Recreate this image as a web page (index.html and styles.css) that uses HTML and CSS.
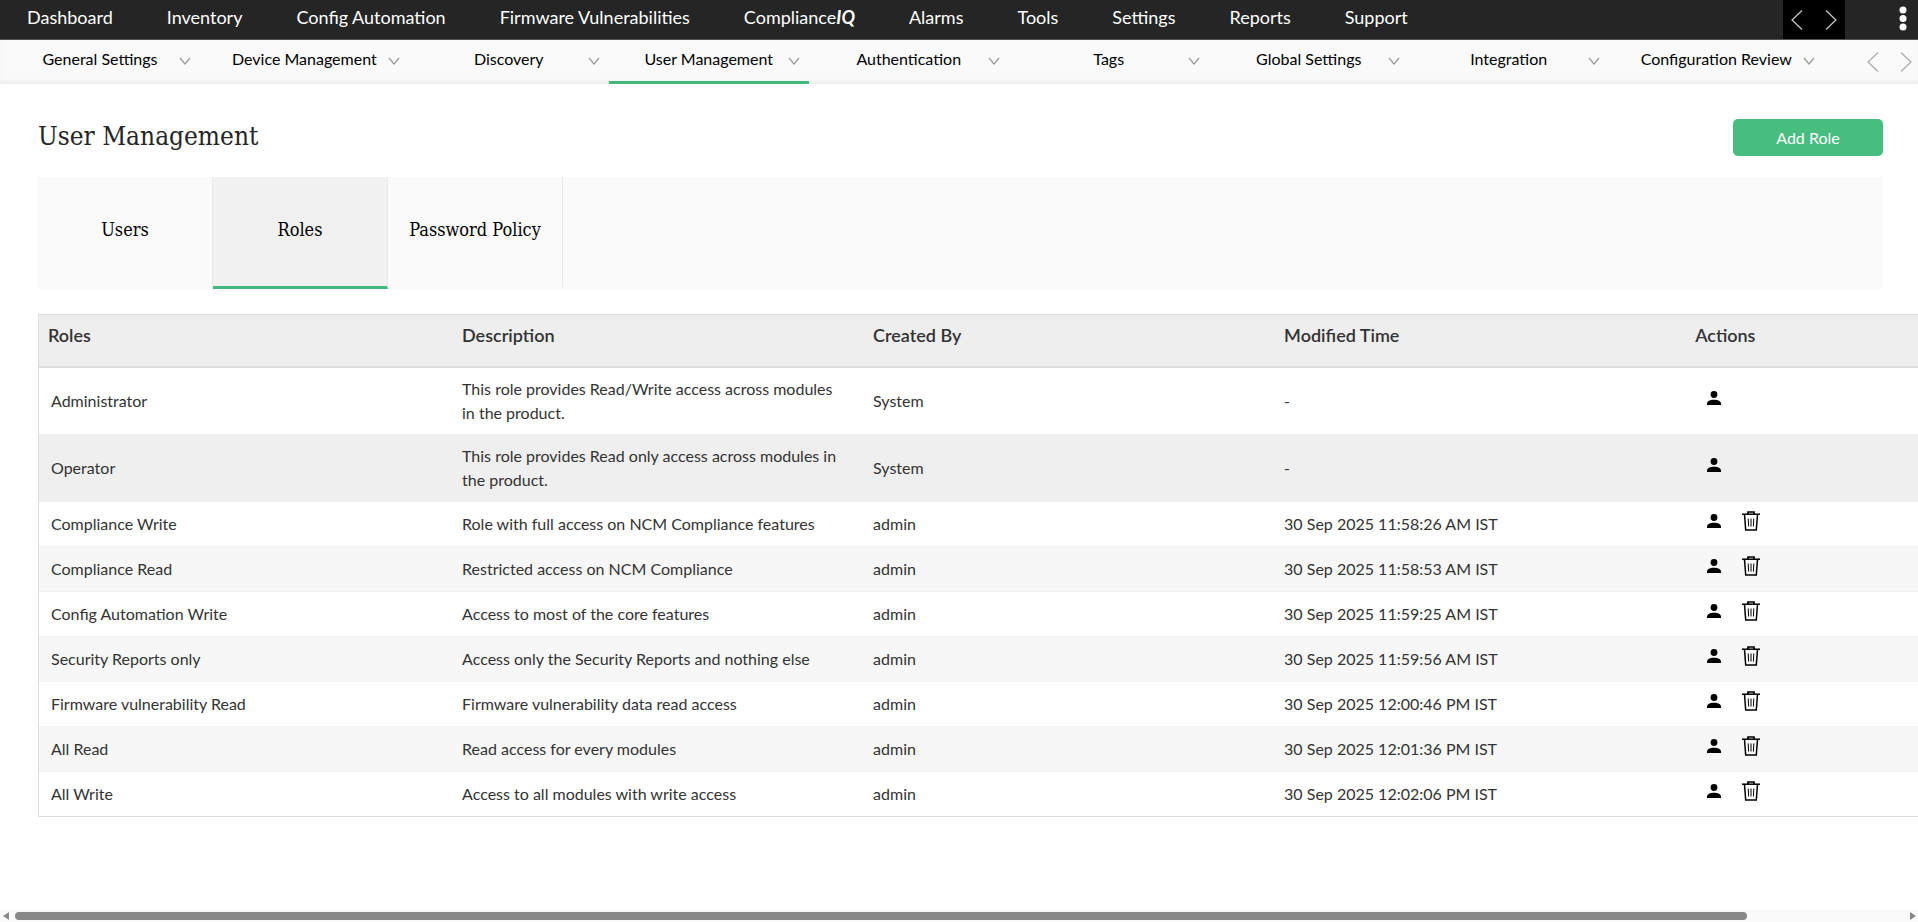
FILE: index.html
```html
<!DOCTYPE html>
<html lang="en">
<head>
<meta charset="utf-8">
<title>User Management</title>
<link rel="stylesheet" href="styles.css">
</head>
<body>
<svg class="sprite" aria-hidden="true">
  <symbol id="down" viewBox="0 0 12 8"><path d="M1 1l5 6 5-6" fill="none" stroke="currentColor" stroke-width="1.2"/></symbol>
  <symbol id="left" viewBox="0 0 12 20"><path d="M11 .5L1 10l10 9.5" fill="none" stroke="currentColor" stroke-width="1.2"/></symbol>
  <symbol id="right" viewBox="0 0 12 20"><path d="M1 .5L11 10 1 19.500" fill="none" stroke="currentColor" stroke-width="1.2"/></symbol>
  <symbol id="person" viewBox="0 0 14 14"><circle cx="7" cy="3.500" r="3.400"/><path d="M0 14v-1.600C0 10.200 3.200 8.700 7 8.700s7 1.500 7 3.700V14z"/></symbol>
  <symbol id="trash" viewBox="0 0 18 20"><g fill="none" stroke="currentColor"><path d="M0 3.200h18" stroke-width="1.500"/><path d="M6 3V1h6v2" stroke-width="1.700"/><path d="M2.500 3.500l1.200 15.600h10.600l1.200-15.600" stroke-width="1.500"/><path d="M6.200 7.500l.4 8M9 7.500v8M11.800 7.500l-.4 8" stroke-width="1"/></g></symbol>
  <symbol id="dots" viewBox="0 0 8 26"><circle cx="4" cy="4" r="3.500"/><circle cx="4" cy="12.500" r="3.500"/><circle cx="4" cy="21" r="3.500"/></symbol>
  <symbol id="tri" viewBox="0 0 6 8"><path d="M6 0v8L0 4z"/></symbol>
</svg>

<header class="topbar">
  <nav class="topnav" aria-label="Main">
    <a href="#">Dashboard</a>
    <a href="#">Inventory</a>
    <a href="#">Config Automation</a>
    <a href="#">Firmware Vulnerabilities</a>
    <a href="#">Compliance<b class="iq">IQ</b></a>
    <a href="#">Alarms</a>
    <a href="#">Tools</a>
    <a href="#">Settings</a>
    <a href="#">Reports</a>
    <a href="#">Support</a>
  </nav>
  <div class="pager pager-dark">
    <button type="button" aria-label="Previous menus"><svg class="arrow"><use href="#left"/></svg></button>
    <button type="button" aria-label="Next menus"><svg class="arrow"><use href="#right"/></svg></button>
  </div>
  <button type="button" class="more" aria-label="More"><svg class="dots"><use href="#dots"/></svg></button>
</header>

<div class="subbar">
  <nav class="subnav" aria-label="Settings">
    <a href="#">General Settings<svg class="down"><use href="#down"/></svg></a>
    <a href="#">Device Management<svg class="down"><use href="#down"/></svg></a>
    <a href="#">Discovery<svg class="down"><use href="#down"/></svg></a>
    <a href="#" class="current">User Management<svg class="down"><use href="#down"/></svg></a>
    <a href="#">Authentication<svg class="down"><use href="#down"/></svg></a>
    <a href="#">Tags<svg class="down"><use href="#down"/></svg></a>
    <a href="#">Global Settings<svg class="down"><use href="#down"/></svg></a>
    <a href="#">Integration<svg class="down"><use href="#down"/></svg></a>
    <a href="#">Configuration Review<svg class="down"><use href="#down"/></svg></a>
  </nav>
  <div class="pager pager-light">
    <button type="button" aria-label="Previous settings"><svg class="arrow"><use href="#left"/></svg></button>
    <button type="button" aria-label="Next settings"><svg class="arrow"><use href="#right"/></svg></button>
  </div>
</div>

<main class="page">
  <div class="heading">
    <h1>User Management</h1>
    <button type="button" class="primary">Add Role</button>
  </div>
  <nav class="tabs" aria-label="User Management">
    <a href="#">Users</a>
    <a href="#" class="current">Roles</a>
    <a href="#">Password Policy</a>
  </nav>
  <table class="roles">
    <thead>
      <tr><th>Roles</th><th>Description</th><th>Created By</th><th>Modified Time</th><th>Actions</th></tr>
    </thead>
    <tbody>
      <tr><td>Administrator</td><td>This role provides Read/Write access across modules in the product.</td><td>System</td><td>-</td>
        <td><div class="actions"><button type="button" aria-label="View role"><svg class="person"><use href="#person"/></svg></button></div></td></tr>
      <tr class="hovered"><td>Operator</td><td>This role provides Read only access across modules in the product.</td><td>System</td><td>-</td>
        <td><div class="actions"><button type="button" aria-label="View role"><svg class="person"><use href="#person"/></svg></button></div></td></tr>
      <tr><td>Compliance Write</td><td>Role with full access on NCM Compliance features</td><td>admin</td><td>30 Sep 2025 11:58:26 AM IST</td>
        <td><div class="actions"><button type="button" aria-label="View role"><svg class="person"><use href="#person"/></svg></button><button type="button" aria-label="Delete role"><svg class="trash"><use href="#trash"/></svg></button></div></td></tr>
      <tr><td>Compliance Read</td><td>Restricted access on NCM Compliance</td><td>admin</td><td>30 Sep 2025 11:58:53 AM IST</td>
        <td><div class="actions"><button type="button" aria-label="View role"><svg class="person"><use href="#person"/></svg></button><button type="button" aria-label="Delete role"><svg class="trash"><use href="#trash"/></svg></button></div></td></tr>
      <tr><td>Config Automation Write</td><td>Access to most of the core features</td><td>admin</td><td>30 Sep 2025 11:59:25 AM IST</td>
        <td><div class="actions"><button type="button" aria-label="View role"><svg class="person"><use href="#person"/></svg></button><button type="button" aria-label="Delete role"><svg class="trash"><use href="#trash"/></svg></button></div></td></tr>
      <tr><td>Security Reports only</td><td>Access only the Security Reports and nothing else</td><td>admin</td><td>30 Sep 2025 11:59:56 AM IST</td>
        <td><div class="actions"><button type="button" aria-label="View role"><svg class="person"><use href="#person"/></svg></button><button type="button" aria-label="Delete role"><svg class="trash"><use href="#trash"/></svg></button></div></td></tr>
      <tr><td>Firmware vulnerability Read</td><td>Firmware vulnerability data read access</td><td>admin</td><td>30 Sep 2025 12:00:46 PM IST</td>
        <td><div class="actions"><button type="button" aria-label="View role"><svg class="person"><use href="#person"/></svg></button><button type="button" aria-label="Delete role"><svg class="trash"><use href="#trash"/></svg></button></div></td></tr>
      <tr><td>All Read</td><td>Read access for every modules</td><td>admin</td><td>30 Sep 2025 12:01:36 PM IST</td>
        <td><div class="actions"><button type="button" aria-label="View role"><svg class="person"><use href="#person"/></svg></button><button type="button" aria-label="Delete role"><svg class="trash"><use href="#trash"/></svg></button></div></td></tr>
      <tr><td>All Write</td><td>Access to all modules with write access</td><td>admin</td><td>30 Sep 2025 12:02:06 PM IST</td>
        <td><div class="actions"><button type="button" aria-label="View role"><svg class="person"><use href="#person"/></svg></button><button type="button" aria-label="Delete role"><svg class="trash"><use href="#trash"/></svg></button></div></td></tr>
    </tbody>
  </table>
</main>

<div class="hscroll" aria-hidden="true">
  <svg class="tri"><use href="#tri"/></svg>
  <div class="track"><div class="thumb"></div></div>
  <svg class="tri flip"><use href="#tri"/></svg>
</div>
</body>
</html>
```

FILE: styles.css
```css
* { box-sizing: border-box; }

body {
  margin: 0;
  min-height: 100vh;
  display: flex;
  flex-direction: column;
  background: #fff;
  color: #333;
  font-family: Lato, "Open Sans", sans-serif;
  font-size: 16px;
}

a { color: inherit; text-decoration: none; }
button { border: 0; padding: 0; background: none; color: inherit; font: inherit; cursor: pointer; }
svg { display: block; fill: currentColor; }
.sprite { display: none; }

.topbar {
  display: flex;
  height: 40px;
  background: #252525;
  border-bottom: 1px solid #555;
  color: #fff;
  font-size: 18px;
}
.topnav { display: flex; flex: 1; }
.topnav a { padding: 0 27px; line-height: 35px; white-space: nowrap; }
.iq { font-style: italic; }

.pager { display: flex; align-items: center; justify-content: space-between; }
.arrow { width: 12px; height: 20px; }
.pager-dark { width: 62px; padding: 0 8px; background: #000; color: #ccc; }
.more { width: 73px; padding: 6px 11px 0 0; display: flex; justify-content: flex-end; }
.dots { width: 8px; height: 26px; }

.subbar {
  display: flex;
  height: 44px;
  background: #fafafa;
  box-shadow: inset 0 -4px 4px -2px #e9e9e9;
  color: #000;
}
.subnav { display: flex; flex: 1; }
.subnav a {
  position: relative;
  min-width: 200px;
  padding: 0 32px;
  border-bottom: 3px solid transparent;
  line-height: 38px;
  text-align: center;
  white-space: nowrap;
}
.subnav .current { border-color: #44b97c; }
.down { position: absolute; right: 9px; top: 17px; width: 12px; height: 8px; color: #999; }
.pager-light { width: 60px; padding: 0 6px 0 9px; color: #aaa; }

.page { flex: 1; padding: 35px 35px 24px 38px; overflow: hidden; }
.heading { display: flex; justify-content: space-between; align-items: flex-start; }
h1 {
  margin: 0;
  color: #252525;
  font: 400 26px/35px "DejaVu Serif Condensed", "DejaVu Serif", serif;
}
.primary {
  width: 150px;
  height: 37px;
  border-radius: 5px;
  background: #47bd80;
  color: #fff;
}

.tabs { display: flex; height: 112px; margin-top: 21px; background: #fafafa; color: #000; }
.tabs a {
  width: 175px;
  border-right: 1px solid #e8e8e8;
  border-bottom: 3px solid transparent;
  font: 400 18px/106px "DejaVu Serif Condensed", "DejaVu Serif", serif;
  text-align: center;
  white-space: nowrap;
}
.tabs .current { background: #f1f1f1; border-bottom-color: #44b97c; }

.roles {
  width: 111.5%;
  margin-top: 25px;
  border: 1px solid #ddd;
  border-spacing: 0;
  table-layout: fixed;
}
th {
  height: 53px;
  padding: 8px 12px 18px;
  background: #eee;
  border-bottom: 2px solid #ddd;
  font-size: 18px;
  font-weight: 600;
  line-height: 25px;
  text-align: left;
}
th:first-child { padding-left: 9px; }
td { padding: 9px 12px; border-bottom: 1px solid #f2f2f2; line-height: 24px; }
tbody tr:nth-child(even) { background: #f7f7f7; }
tbody tr.hovered { background: #efefef; }
tbody tr:last-child td { border-bottom: 0; }
.actions { display: flex; align-items: center; height: 26px; padding: 0 12px 6px; gap: 21px; color: #000; }
.person { width: 14px; height: 14px; }
.trash { width: 18px; height: 20px; }

.hscroll { display: flex; align-items: center; height: 12px; padding: 0 2px 0 3px; gap: 6px; background: #fafafa; color: #888; }
.tri { width: 6px; height: 8px; }
.flip { transform: rotate(180deg); }
.track { flex: 1; }
.thumb { width: 91.7%; height: 8px; border-radius: 4px; background: #888; }
```
